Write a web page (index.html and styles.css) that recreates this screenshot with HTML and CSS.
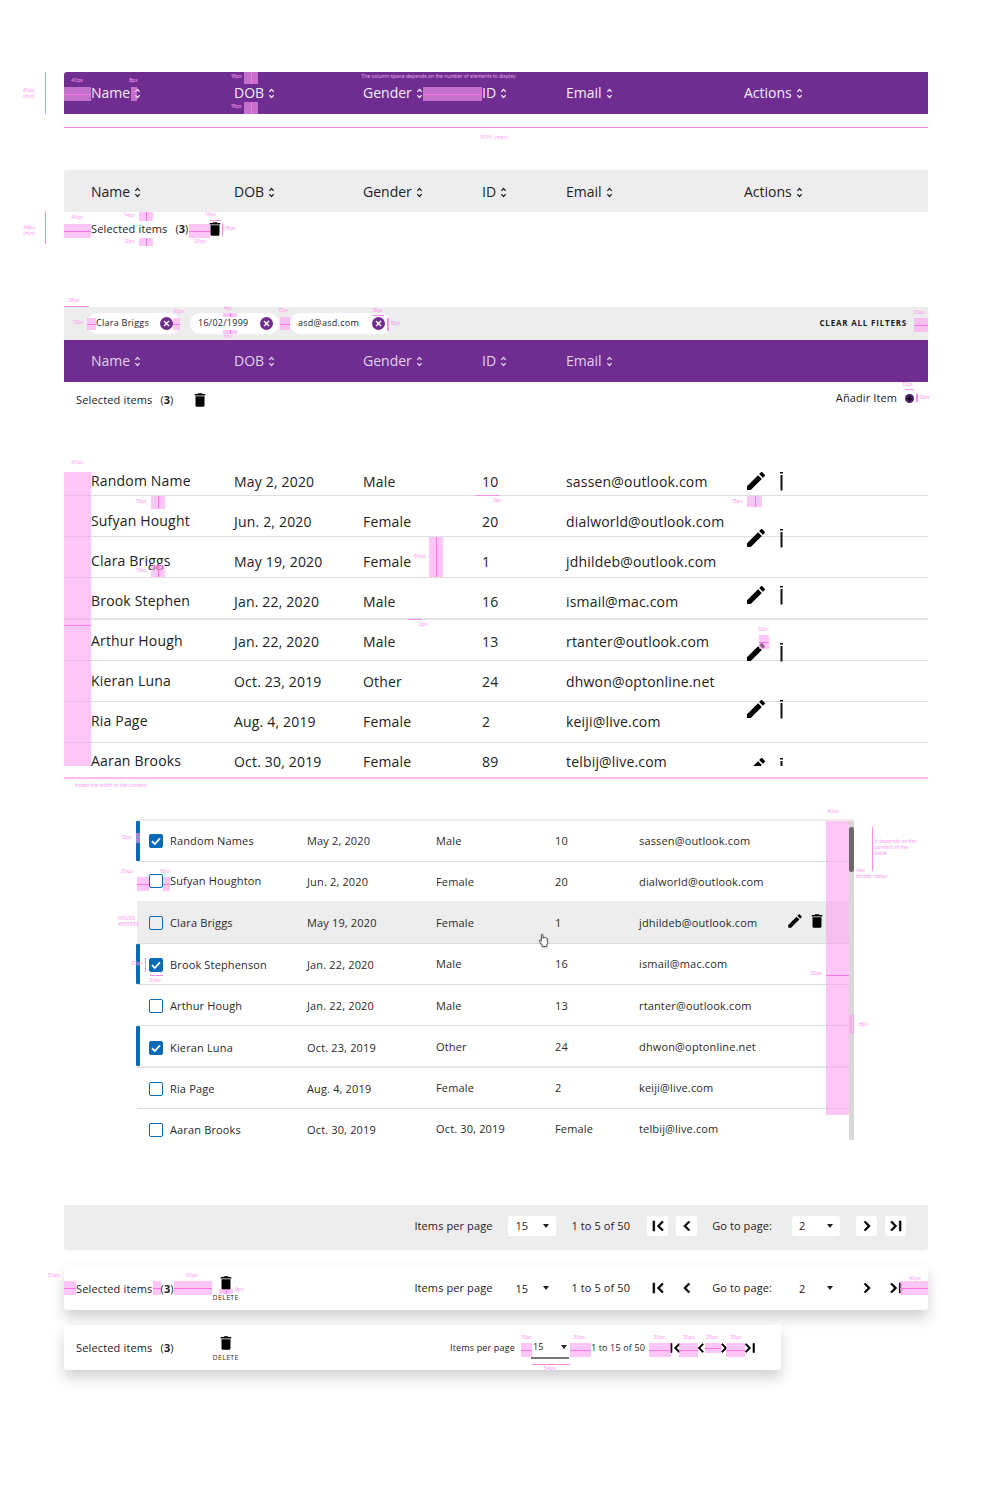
FILE: index.html
```html
<!DOCTYPE html>
<html lang="en">
<head>
<meta charset="utf-8">
<title>Table specification</title>
<link rel="stylesheet" href="styles.css">
</head>
<body>
<svg class="defs" aria-hidden="true">
  <symbol id="sort" viewBox="0 0 8 12"><path d="M1.500 4.200 4 1.400l2.500 2.800M1.500 7.800 4 10.600l2.500-2.800" fill="none" stroke="currentColor" stroke-width="1.400"/></symbol>
  <symbol id="pencil" viewBox="0 0 24 24"><path d="M3 17.25V21h3.75L17.81 9.94l-3.75-3.75L3 17.25zM20.71 7.04c.39-.39.39-1.02 0-1.41l-2.34-2.34c-.39-.39-1.02-.39-1.41 0l-1.83 1.83 3.75 3.75 1.83-1.83z"/></symbol>
  <symbol id="trash" viewBox="0 0 24 24"><path d="M6 19c0 1.1.9 2 2 2h8c1.1 0 2-.9 2-2V7H6v12zM19 4h-3.5l-1-1h-5l-1 1H5v2h14V4z"/></symbol>
  <symbol id="more" viewBox="0 0 5 19"><path d="M1 0h3v1.5H1zM1.5 3h2v15.500h-2z"/></symbol>
  <symbol id="close" viewBox="0 0 13 13"><circle cx="6.500" cy="6.500" r="6.500" fill="#6f2c91"/><path d="m4 4 5 5M9 4 4 9" stroke="#fff" stroke-width="1.400"/></symbol>
  <symbol id="check" viewBox="0 0 14 14"><path d="m3 7.200 2.800 2.800L11 4.400" fill="none" stroke="#fff" stroke-width="1.700"/></symbol>
  <symbol id="first" viewBox="0 0 24 24"><path d="M18.410 16.590 13.820 12l4.590-4.590L17 6l-6 6 6 6zM6 6h2v12H6z"/></symbol>
  <symbol id="last" viewBox="0 0 24 24"><path d="M5.590 7.410 10.180 12l-4.590 4.590L7 18l6-6-6-6zM16 6h2v12h-2z"/></symbol>
  <symbol id="prev" viewBox="0 0 24 24"><path d="M15.410 7.410 14 6l-6 6 6 6 1.410-1.410L10.830 12z"/></symbol>
  <symbol id="next" viewBox="0 0 24 24"><path d="M10 6 8.590 7.410 13.170 12l-4.580 4.590L10 18l6-6z"/></symbol>
</svg>

<main class="canvas">
  <div class="thead purple">
    <span class="th">Name <svg class="sort"><use href="#sort"/></svg></span>
    <span class="th">DOB <svg class="sort"><use href="#sort"/></svg></span>
    <span class="th">Gender <svg class="sort"><use href="#sort"/></svg></span>
    <span class="th">ID <svg class="sort"><use href="#sort"/></svg></span>
    <span class="th">Email <svg class="sort"><use href="#sort"/></svg></span>
    <span class="th">Actions <svg class="sort"><use href="#sort"/></svg></span>
  </div>
  <div class="max-rule"></div>

  <div class="thead grey">
    <span class="th">Name <svg class="sort"><use href="#sort"/></svg></span>
    <span class="th">DOB <svg class="sort"><use href="#sort"/></svg></span>
    <span class="th">Gender <svg class="sort"><use href="#sort"/></svg></span>
    <span class="th">ID <svg class="sort"><use href="#sort"/></svg></span>
    <span class="th">Email <svg class="sort"><use href="#sort"/></svg></span>
    <span class="th">Actions <svg class="sort"><use href="#sort"/></svg></span>
  </div>
  <div class="selected-row first">
    <span class="selected">Selected items</span><span class="count">(<b>3</b>)</span>
    <svg class="icon-trash gap-20"><use href="#trash"/></svg>
  </div>

  <div class="filters">
    <span class="chip c1"><span>Clara Briggs</span><svg class="x"><use href="#close"/></svg></span>
    <span class="chip c2"><span>16/02/1999</span><svg class="x"><use href="#close"/></svg></span>
    <span class="chip c3"><span>asd@asd.com</span><svg class="x"><use href="#close"/></svg></span>
    <span class="clear">CLEAR ALL FILTERS</span>
  </div>
  <div class="thead purple dim">
    <span class="th">Name <svg class="sort"><use href="#sort"/></svg></span>
    <span class="th">DOB <svg class="sort"><use href="#sort"/></svg></span>
    <span class="th">Gender <svg class="sort"><use href="#sort"/></svg></span>
    <span class="th">ID <svg class="sort"><use href="#sort"/></svg></span>
    <span class="th">Email <svg class="sort"><use href="#sort"/></svg></span>
  </div>
  <div class="selected-row second">
    <span class="selected">Selected items</span><span class="count">(<b>3</b>)</span>
    <svg class="icon-trash gap-21"><use href="#trash"/></svg>
    <span class="add">Añadir Item</span>
    <span class="add-dot">+</span>
  </div>

  <section class="table-one">
    <div class="rules"><i></i><i></i><i></i><i class="thick"></i><i></i><i></i><i></i><i></i></div>
    <div class="row1"><span class="n">Random Name</span><span>May 2, 2020</span><span>Male</span><span>10</span><span>sassen@outlook.com</span></div>
    <div class="row1"><span class="n">Sufyan Hought</span><span>Jun. 2, 2020</span><span>Female</span><span>20</span><span>dialworld@outlook.com</span></div>
    <div class="row1"><span class="n">Clara Briggs</span><span>May 19, 2020</span><span>Female</span><span>1</span><span>jdhildeb@outlook.com</span></div>
    <div class="row1"><span class="n">Brook Stephen</span><span>Jan. 22, 2020</span><span>Male</span><span>16</span><span>ismail@mac.com</span></div>
    <div class="row1"><span class="n">Arthur Hough</span><span>Jan. 22, 2020</span><span>Male</span><span>13</span><span>rtanter@outlook.com</span></div>
    <div class="row1"><span class="n">Kieran Luna</span><span>Oct. 23, 2019</span><span>Other</span><span>24</span><span>dhwon@optonline.net</span></div>
    <div class="row1"><span class="n">Ria Page</span><span>Aug. 4, 2019</span><span>Female</span><span>2</span><span>keiji@live.com</span></div>
    <div class="row1"><span class="n">Aaran Brooks</span><span>Oct. 30, 2019</span><span>Female</span><span>89</span><span>telbij@live.com</span></div>
    <div class="actions-stack">
      <div class="act"><svg class="pencil"><use href="#pencil"/></svg><svg class="more"><use href="#more"/></svg></div>
      <div class="act"><svg class="pencil"><use href="#pencil"/></svg><svg class="more"><use href="#more"/></svg></div>
      <div class="act"><svg class="pencil"><use href="#pencil"/></svg><svg class="more"><use href="#more"/></svg></div>
      <div class="act"><svg class="pencil"><use href="#pencil"/></svg><svg class="more"><use href="#more"/></svg></div>
      <div class="act"><svg class="pencil"><use href="#pencil"/></svg><svg class="more"><use href="#more"/></svg></div>
      <div class="act clipped"><svg class="pencil"><use href="#pencil"/></svg><svg class="more"><use href="#more"/></svg></div>
    </div>
  </section>

  <section class="table-two">
    <div class="row2 r1 on"><span class="name-cell"><span class="box on-box"><svg><use href="#check"/></svg></span>Random Names</span><span>May 2, 2020</span><span>Male</span><span>10</span><span>sassen@outlook.com</span></div>
    <div class="row2 r2"><span class="name-cell"><span class="box"></span>Sufyan Houghton</span><span class="lo">Jun. 2, 2020</span><span class="lo">Female</span><span class="lo">20</span><span class="lo">dialworld@outlook.com</span></div>
    <div class="row2 r3 hover"><span class="name-cell"><span class="box"></span>Clara Briggs</span><span>May 19, 2020</span><span>Female</span><span>1</span><span>jdhildeb@outlook.com</span>
      <span class="hover-actions"><svg class="pencil-sm"><use href="#pencil"/></svg><svg class="trash-sm"><use href="#trash"/></svg></span>
    </div>
    <div class="row2 r4 on"><span class="name-cell lo"><span class="box on-box"><svg><use href="#check"/></svg></span>Brook Stephenson</span><span class="lo">Jan. 22, 2020</span><span>Male</span><span>16</span><span>ismail@mac.com</span></div>
    <div class="row2 r5"><span class="name-cell"><span class="box"></span>Arthur Hough</span><span>Jan. 22, 2020</span><span>Male</span><span>13</span><span>rtanter@outlook.com</span></div>
    <div class="row2 r6 on"><span class="name-cell lo"><span class="box on-box"><svg><use href="#check"/></svg></span>Kieran Luna</span><span class="lo">Oct. 23, 2019</span><span>Other</span><span>24</span><span>dhwon@optonline.net</span></div>
    <div class="row2 r7"><span class="name-cell lo"><span class="box"></span>Ria Page</span><span class="lo">Aug. 4, 2019</span><span>Female</span><span>2</span><span>keiji@live.com</span></div>
    <div class="row2 r8"><span class="name-cell lo"><span class="box"></span>Aaran Brooks</span><span class="lo">Oct. 30, 2019</span><span>Oct. 30, 2019</span><span>Female</span><span>telbij@live.com</span></div>
    <div class="scrollbar"><div class="thumb"></div></div>
  </section>

  <div class="bar bar-grey">
    <div class="pager">
      <span>Items per page</span>
      <span class="sel m16"><span>15</span><i class="caret"></i></span>
      <span class="m15">1 to 5 of 50</span>
      <span class="nav-btn m17"><svg><use href="#first"/></svg></span>
      <span class="nav-btn m8"><svg><use href="#prev"/></svg></span>
      <span class="m15">Go to page:</span>
      <span class="sel m20"><span>2</span><i class="caret"></i></span>
      <span class="nav-btn m16"><svg><use href="#next"/></svg></span>
      <span class="nav-btn m8"><svg><use href="#last"/></svg></span>
    </div>
  </div>

  <div class="bar bar-white">
    <span class="selected">Selected items</span><span class="count">(<b>3</b>)</span>
    <span class="delete"><svg class="icon-trash"><use href="#trash"/></svg><span>DELETE</span></span>
    <div class="pager flat">
      <span>Items per page</span>
      <span class="sel m16"><span>15</span><i class="caret"></i></span>
      <span class="m15">1 to 5 of 50</span>
      <span class="nav-btn m17"><svg><use href="#first"/></svg></span>
      <span class="nav-btn m8"><svg><use href="#prev"/></svg></span>
      <span class="m15">Go to page:</span>
      <span class="sel m20"><span>2</span><i class="caret"></i></span>
      <span class="nav-btn m16"><svg><use href="#next"/></svg></span>
      <span class="nav-btn m8"><svg><use href="#last"/></svg></span>
    </div>
  </div>

  <div class="bar bar-small">
    <span class="selected">Selected items</span><span class="count">(<b>3</b>)</span>
    <span class="delete"><svg class="icon-trash"><use href="#trash"/></svg><span>DELETE</span></span>
    <div class="mini-pager">
      <span>Items per page</span>
      <span class="mini-sel"><span>15</span><i class="caret"></i></span>
      <span class="mini-range">1 to 15 of 50</span>
      <svg class="mini-ico g1"><use href="#first"/></svg>
      <svg class="mini-ico g2"><use href="#prev"/></svg>
      <svg class="mini-ico g3"><use href="#next"/></svg>
      <svg class="mini-ico g4"><use href="#last"/></svg>
    </div>
  </div>

  <svg class="hand" viewBox="0 0 12 16"><path d="M3.800 1.500c.7-.6 1.500-.2 1.600.6l.2 3.600.3-.9c.4-.6 1.200-.4 1.400.2.400-.5 1.200-.3 1.400.3.500-.3 1.200 0 1.300.7l.3 4.200c0 1-.3 1.800-.8 2.500v1.800H4.600v-1.500L1.500 8.800c-.5-.7.300-1.500 1.100-1l1.100.9z" fill="#fff" stroke="#222" stroke-width=".8"/></svg>

  <!-- Redline annotations sit on the canvas, over the components -->
  <div class="specs" aria-hidden="true">
    <span class="lb l1">60px<br>(min)</span><i class="vl v1"></i>
    <span class="lb l2">40px</span><i class="bx hm b1"></i>
    <span class="lb l3">8px</span><i class="bx b2"></i>
    <span class="lb l4">16px</span><i class="bx vm b3"></i>
    <span class="lb l5">16px</span><i class="bx vm b4"></i>
    <span class="lb l6">The column space depends on the number of elements to display</span><i class="bx hm b5"></i>
    <span class="lb l7">100% (max)</span>

    <span class="lb l8">48px<br>(min)</span><i class="vl v2"></i>
    <span class="lb l9">40px</span><i class="bx hm b6"></i>
    <span class="lb l10">14px</span><i class="bx vm b7"></i>
    <span class="lb l11">12px</span><i class="bx vm b8"></i>
    <span class="lb l12">20px</span><i class="bx hm b9"></i>
    <span class="lb l13">14px</span><i class="hl h1"></i>
    <span class="lb l14">16px</span><i class="vl v3"></i>

    <span class="lb l15">26px</span><i class="hl h2"></i>
    <span class="lb l16">12px</span><i class="bx hm b10"></i>
    <span class="lb l17">10px</span><i class="bx hm b11"></i>
    <span class="lb l18">6px</span><i class="bx vm b12"></i>
    <span class="lb l19">6px</span><i class="bx vm b13"></i>
    <span class="lb l20">15px</span><i class="bx hm b14"></i>
    <span class="lb l21">18px</span><i class="hl h3"></i>
    <span class="lb l22">18px</span><i class="vl v4"></i>
    <span class="lb l23">20px</span><i class="bx hm b15"></i>
    <span class="lb l24">12px</span><i class="hl h4"></i>
    <span class="lb l25">12px</span><i class="vl v5"></i>

    <span class="lb l26">40px</span><i class="bx b16"></i><i class="hl h5"></i>
    <span class="lb l27">15px</span><i class="bx vm b17"></i>
    <span class="lb l28">15px</span><i class="bx vm b18"></i>
    <span class="lb l29">60px</span><i class="bx vm b19"></i>
    <span class="lb l30">2px</span><i class="hl h6"></i>
    <span class="lb l31">2px</span><i class="hl h7"></i>
    <span class="lb l32">15px</span><i class="bx vm b20"></i>
    <span class="lb l33">12px</span><i class="bx hm b21"></i>
    <span class="lb l34">Adapt the width to the content</span>

    <span class="lb l35">12px</span><i class="bx b22"></i>
    <span class="lb l36">20px</span><i class="bx hm b23"></i>
    <span class="lb l37">15px</span><i class="bx hm b24"></i>
    <span class="lb l38"><b>HOVER</b><br><b>#EEEEEE</b></span>
    <span class="lb l39">20px</span><i class="vl v6"></i>
    <span class="lb l40">20px</span><i class="hl h8"></i>
    <span class="lb l41">40px</span><i class="bx b25"></i>
    <span class="lb l42">it depends on the<br>content of the<br>table</span><i class="vl v7"></i>
    <span class="lb l43">4px<br>border radius</span>
    <span class="lb l44">32px</span><i class="hl h9"></i>
    <span class="lb l45">8px</span><i class="bx b26"></i>

    <span class="lb l46">20px</span><i class="bx hm b27"></i>
    <i class="bx hm b28"></i>
    <span class="lb l47">50px</span><i class="bx hm b29"></i>
    <span class="lb l48">8px</span><i class="bx vm b30"></i>
    <span class="lb l49">40px</span><i class="bx hm b31"></i>

    <span class="lb l50">15px</span><i class="bx hm b32"></i>
    <span class="lb l51">30px</span><i class="bx hm b33"></i>
    <span class="lb l52">30px</span><i class="bx hm b34"></i>
    <span class="lb l53">30px</span><i class="bx hm b35"></i>
    <span class="lb l54">26px</span><i class="bx hm b36"></i>
    <span class="lb l55">30px</span><i class="bx hm b37"></i>
    <i class="hl h10"></i><span class="lb l56">54px</span>
  </div>
</main>
</body>
</html>
```
FILE: styles.css
```css
* { box-sizing: border-box; }
html, body { margin: 0; padding: 0; background: #fff; }
body { font-family: "Open Sans", "Liberation Sans", sans-serif; color: #222; }
.defs { position: absolute; width: 0; height: 0; overflow: hidden; }
.canvas { position: relative; width: 989px; height: 1511px; padding: 72px 61px 0 64px; overflow: hidden; }

/* Header bars */
.thead {
  display: grid;
  grid-template-columns: 143px 129px 119px 84px 178px 1fr;
  align-items: center;
  height: 42px;
  padding-left: 27px;
  font-size: 14px;
  border-radius: 3px 0 0 0;
}
.th { display: flex; align-items: center; gap: 4px; line-height: 20px; }
.purple { background: #6f2c91; color: #f6eff8; }
.purple.dim { color: #e3d3ea; border-radius: 0; }
.grey { background: #ededed; color: #222; margin-top: 42px; padding-top: 2px; }
.sort { width: 7px; height: 11px; color: currentColor; }
.max-rule { height: 1px; margin-top: 13px; background: #ef82e8; }

/* Selected rows */
.selected-row { display: flex; align-items: center; font-size: 11px; line-height: 16px; }
.selected-row.first { height: 34px; padding-left: 27px; }
.selected-row.second { height: 36px; padding: 0 14px 0 12px; }
.selected { letter-spacing: .15px; }
.count { margin-left: 8px; }
.icon-trash { display: block; width: 18px; height: 18px; fill: #000; }
.gap-20 { margin-left: 18px; }
.gap-21 { margin-left: 18px; }
.add { margin: 0 0 4px auto; letter-spacing: .1px; }
.add-dot {
  width: 9px; height: 9px; margin: 0 0 4px 8px; border-radius: 50%;
  background: #4d1f69; color: #000;
  font: 700 10px/8px "Open Sans", sans-serif; text-align: center;
}

/* Filter bar */
.filters {
  display: flex; align-items: center; gap: 10px;
  height: 33px; margin-top: 61px; padding: 0 21px 0 23px;
  background: #ededed;
}
.chip {
  display: flex; align-items: center; justify-content: space-between;
  height: 21px; border-radius: 11px; background: #fff;
  font-size: 9px; padding: 0 7px 0 9px; letter-spacing: .27px;
}
.chip > span { margin-bottom: 2px; }
.c1 { width: 93px; }
.c2 { width: 89px; padding: 0 6px 0 8px; }
.c3 { width: 101px; padding: 0 6px 0 8px; margin-left: 1px; }
.x { width: 13px; height: 13px; }
.clear { margin: 0 0 2px auto; font-size: 8px; font-weight: 700; letter-spacing: .8px; color: #1b1b1b; }

/* Read-only table */
.table-one { position: relative; margin-top: 44px; height: 320px; }
.row1 {
  display: grid;
  grid-template-columns: 143px 129px 119px 84px 1fr;
  height: 40px; padding: 12px 0 0 27px;
  font-size: 14px; line-height: 16px; letter-spacing: .18px;
}
.row1 .n { margin-top: -1px; }
.rules { position: absolute; inset: 0 0 auto 0; }
.rules i { display: block; height: 41px; border-bottom: 1px solid #dedede; }
.rules i:first-child { height: 34px; }
.rules i.thick { border-bottom-width: 2px; height: 42px; border-color: #e4e4e4; }
.rules i:last-child { height: 36px; border-bottom: 2px solid #fdb9f2; }
.actions-stack { position: absolute; left: 680px; top: 7px; }
.act { display: flex; height: 57px; }
.act.clipped { height: 11px; margin-top: 1px; overflow: hidden; }
.pencil { width: 24px; height: 24px; fill: #000; }
.more { width: 5px; height: 19px; margin: 3px 0 0 11px; fill: #111; }

/* Selectable table */
.table-two {
  position: relative; margin: 37px 0 0 73px; width: 717px; height: 321px;
  border-top: 2px solid #ececec; font-size: 11px; line-height: 16px;
}
.row2 {
  position: relative;
  display: grid;
  grid-template-columns: 158px 129px 119px 84px 1fr;
  padding-left: 12px;
  border-bottom: 1px solid #dcdcdc;
  letter-spacing: .15px;
  color: #2a2a2a;
}
.row2.on::before {
  content: ""; position: absolute; left: -1px; top: 0; bottom: 0; width: 4px;
  background: #0a6ab5; border-radius: 1px;
}
.r1 { height: 41px; padding-top: 12px; }
.r2 { height: 39px; padding-top: 11px; border-bottom: 0; }
.r3 { height: 43px; padding-top: 14px; }
.r4 { height: 41px; padding-top: 12px; }
.r5 { height: 41px; padding-top: 13px; }
.r6 { height: 42px; padding-top: 13px; border-bottom: 2px solid #e6e6e6; }
.r7 { height: 41px; padding-top: 12px; }
.r8 { height: 31px; padding-top: 12px; border-bottom: 0; }
.hover { background: #ededed; }
.lo { margin-top: 1px; }
.name-cell { display: flex; align-items: center; gap: 7px; align-self: start; height: 16px; }
.box {
  display: block; width: 14px; height: 14px; flex: none;
  border: 1.500px solid #0a6ab5; border-radius: 2px; background: transparent;
}
.box.on-box { background: #0a6ab5; }
.box svg { display: block; width: 14px; height: 14px; margin: -1.500px; }
.hover-actions { position: absolute; left: 649px; top: 11px; display: flex; gap: 4px; }
.pencil-sm { width: 18px; height: 18px; fill: #000; }
.trash-sm { width: 18px; height: 18px; fill: #000; }
.scrollbar { position: absolute; left: 712px; top: 0; width: 5px; height: 319px; background: #d8d8d8; }
.thumb { width: 5px; height: 45px; margin-top: 6px; border-radius: 3px; background: #6a6a6a; }

/* Bars */
.bar { display: flex; align-items: center; font-size: 11px; line-height: 16px; letter-spacing: .1px; }
.bar-grey {
  height: 45px; margin-top: 65px; padding: 0 22px 3px 0;
  background: #ededed; border-radius: 0 0 3px 3px; justify-content: flex-end;
}
.bar-white {
  height: 45px; margin-top: 15px; padding: 0 22px 0 12px;
  background: #fff; border-radius: 3px; box-shadow: 0 8px 14px rgba(0,0,0,.18);
}
.bar-small {
  width: 717px; height: 45px; margin-top: 15px; padding: 0 22px 0 12px;
  background: #fff; border-radius: 3px; box-shadow: 0 8px 14px rgba(0,0,0,.18);
}
.delete { display: flex; flex-direction: column; align-items: center; width: 30px; margin-left: 37px; font-size: 7px; line-height: 9px; letter-spacing: .3px; color: #333; }
.bar-white .delete { margin-top: 1px; }
.bar-white .selected, .bar-white .count { margin-top: 3px; }
.bar-small .selected, .bar-small .count { margin-top: 1px; }
.delete .icon-trash { margin-bottom: 1px; }
.pager { display: flex; align-items: center; }
.flat { margin-left: auto; }
.sel {
  display: flex; align-items: center; justify-content: space-between;
  width: 48px; height: 20px; padding: 0 7px; background: #fff; border-radius: 3px;
}
.flat .sel { background: transparent; padding-top: 2px; }
.flat .caret { margin-top: -2px; }
.caret { display: block; width: 0; height: 0; border: 3.500px solid transparent; border-top: 4px solid #222; border-bottom: 0; }
.nav-btn { display: flex; align-items: center; justify-content: center; width: 21px; height: 20px; background: #fff; border-radius: 3px; }
.flat .nav-btn { background: transparent; }
.nav-btn svg { width: 20px; height: 20px; fill: #000; stroke: #000; stroke-width: .8px; }
.m8 { margin-left: 8px; }
.m15 { margin-left: 15px; }
.m16 { margin-left: 16px; }
.m17 { margin-left: 17px; }
.m20 { margin-left: 20px; }
.mini-pager { display: flex; align-items: center; margin-left: auto; font-size: 9px; letter-spacing: .15px; }
.mini-sel {
  display: flex; align-items: center; justify-content: space-between;
  width: 38px; height: 22px; margin-left: 16px; padding: 0 2px; border-bottom: 2px solid #777;
}
.mini-range { margin-left: 22px; }
.mini-ico { width: 18px; height: 18px; fill: #000; stroke: #000; stroke-width: .8px; }
.g1 { margin-left: 21px; }
.g2 { margin-left: 8px; }
.g3 { margin-left: 5px; }
.g4 { margin-left: 8px; }

.hand { position: absolute; left: 538px; top: 933px; width: 11px; height: 15px; filter: drop-shadow(0 1px 1px rgba(0,0,0,.3)); }

/* Redline annotations */
.specs { position: absolute; inset: 0; pointer-events: none; }
.specs > * { position: absolute; display: block; }
.lb { font: 5px/6px "Inter", "Open Sans", sans-serif; color: #fb9cee; white-space: nowrap; }
.bx { background: rgba(252,160,240,.6); }
.hm::after { content: ""; position: absolute; left: 0; right: 0; top: 50%; height: 1px; background: #fb74ea; }
.vm::after { content: ""; position: absolute; top: 0; bottom: 0; left: 50%; width: 1px; background: #fb74ea; }
.vl { width: 1px; background: #fa8ceb; }
.hl { height: 1px; background: #fa8ceb; }

.l1 { left: 23px; top: 87px; } .v1 { left: 45px; top: 72px; height: 42px; }
.l2 { left: 71px; top: 77px; } .b1 { left: 64px; top: 87px; width: 27px; height: 14px; }
.l3 { left: 129px; top: 77px; } .b2 { left: 131px; top: 87px; width: 6px; height: 14px; }
.l4 { left: 231px; top: 73px; } .b3 { left: 244px; top: 72px; width: 14px; height: 12px; }
.l5 { left: 231px; top: 103px; } .b4 { left: 244px; top: 102px; width: 14px; height: 12px; }
.l6 { left: 361px; top: 73px; color: #e6a2e4; } .b5 { left: 423px; top: 87px; width: 59px; height: 14px; }
.l7 { left: 480px; top: 134px; }

.l8 { left: 23px; top: 224px; } .v2 { left: 45px; top: 211px; height: 33px; }
.l9 { left: 71px; top: 214px; } .b6 { left: 64px; top: 224px; width: 27px; height: 14px; }
.l10 { left: 124px; top: 212px; } .b7 { left: 139px; top: 212px; width: 14px; height: 9px; }
.l11 { left: 124px; top: 238px; } .b8 { left: 139px; top: 238px; width: 14px; height: 8px; }
.l12 { left: 194px; top: 238px; } .b9 { left: 189px; top: 224px; width: 21px; height: 14px; }
.l13 { left: 205px; top: 211px; } .h1 { left: 210px; top: 220px; width: 11px; }
.l14 { left: 225px; top: 225px; } .v3 { left: 222px; top: 223px; height: 13px; }

.l15 { left: 68px; top: 297px; } .h2 { left: 64px; top: 306px; width: 25px; }
.l16 { left: 73px; top: 319px; } .b10 { left: 87px; top: 318px; width: 9px; height: 12px; }
.l17 { left: 173px; top: 308px; } .b11 { left: 173px; top: 318px; width: 7px; height: 12px; }
.l18 { left: 224px; top: 305px; } .b12 { left: 223px; top: 313px; width: 14px; height: 4px; }
.l19 { left: 224px; top: 333px; } .b13 { left: 223px; top: 330px; width: 14px; height: 4px; }
.l20 { left: 278px; top: 307px; } .b14 { left: 280px; top: 317px; width: 10px; height: 13px; }
.l21 { left: 372px; top: 307px; } .h3 { left: 372px; top: 315px; width: 12px; }
.l22 { left: 390px; top: 320px; } .v4 { left: 387px; top: 318px; height: 13px; width: 2px; }
.l23 { left: 913px; top: 309px; } .b15 { left: 914px; top: 318px; width: 14px; height: 14px; }
.l24 { left: 902px; top: 381px; } .h4 { left: 905px; top: 389px; width: 9px; }
.l25 { left: 919px; top: 394px; } .v5 { left: 916px; top: 394px; height: 8px; width: 2px; }

.l26 { left: 71px; top: 459px; } .b16 { left: 64px; top: 472px; width: 27px; height: 294px; }
.h5 { left: 64px; top: 625px; width: 27px; background: #fb74ea; }
.l27 { left: 136px; top: 498px; } .b17 { left: 151px; top: 496px; width: 14px; height: 13px; }
.l28 { left: 136px; top: 567px; } .b18 { left: 151px; top: 565px; width: 14px; height: 12px; }
.l29 { left: 414px; top: 553px; } .b19 { left: 429px; top: 537px; width: 14px; height: 40px; }
.l30 { left: 419px; top: 621px; } .h6 { left: 408px; top: 619px; width: 14px; }
.l31 { left: 493px; top: 497px; } .h7 { left: 476px; top: 495px; width: 23px; }
.l32 { left: 732px; top: 498px; } .b20 { left: 747px; top: 496px; width: 15px; height: 11px; }
.l33 { left: 758px; top: 626px; } .b21 { left: 759px; top: 635px; width: 10px; height: 14px; }
.l34 { left: 75px; top: 782px; }

.l35 { left: 121px; top: 834px; } .b22 { left: 136px; top: 833px; width: 4px; height: 10px; }
.l36 { left: 121px; top: 868px; } .b23 { left: 137px; top: 877px; width: 12px; height: 14px; }
.l37 { left: 160px; top: 868px; } .b24 { left: 163px; top: 877px; width: 7px; height: 14px; }
.l38 { left: 118px; top: 915px; }
.l38 b { font-weight: 400; }
.l39 { left: 131px; top: 960px; } .v6 { left: 145px; top: 958px; height: 14px; }
.l40 { left: 149px; top: 977px; } .h8 { left: 150px; top: 975px; width: 13px; }
.l41 { left: 827px; top: 808px; } .b25 { left: 826px; top: 821px; width: 23px; height: 294px; }
.l42 { left: 875px; top: 838px; } .v7 { left: 872px; top: 827px; height: 44px; }
.l43 { left: 856px; top: 867px; } 
.l44 { left: 810px; top: 970px; } .h9 { left: 826px; top: 975px; width: 23px; background: #fb74ea; }
.l45 { left: 859px; top: 1021px; } .b26 { left: 849px; top: 1015px; width: 5px; height: 19px; }

.l46 { left: 48px; top: 1272px; } .b27 { left: 64px; top: 1281px; width: 12px; height: 14px; }
.b28 { left: 153px; top: 1281px; width: 8px; height: 14px; }
.l47 { left: 186px; top: 1272px; } .b29 { left: 174px; top: 1281px; width: 38px; height: 14px; }
.l48 { left: 235px; top: 1286px; } .b30 { left: 219px; top: 1289px; width: 14px; height: 5px; }
.l49 { left: 909px; top: 1275px; } .b31 { left: 900px; top: 1281px; width: 28px; height: 14px; }

.l50 { left: 521px; top: 1334px; } .b32 { left: 521px; top: 1343px; width: 11px; height: 14px; }
.l51 { left: 573px; top: 1334px; } .b33 { left: 570px; top: 1343px; width: 21px; height: 14px; }
.l52 { left: 653px; top: 1334px; } .b34 { left: 649px; top: 1343px; width: 22px; height: 14px; }
.l53 { left: 683px; top: 1334px; } .b35 { left: 679px; top: 1343px; width: 19px; height: 14px; }
.l54 { left: 706px; top: 1334px; } .b36 { left: 705px; top: 1343px; width: 16px; height: 10px; }
.l55 { left: 730px; top: 1334px; } .b37 { left: 726px; top: 1343px; width: 19px; height: 14px; }
.h10 { left: 532px; top: 1364px; width: 38px; }
.l56 { left: 544px; top: 1365px; }
```
